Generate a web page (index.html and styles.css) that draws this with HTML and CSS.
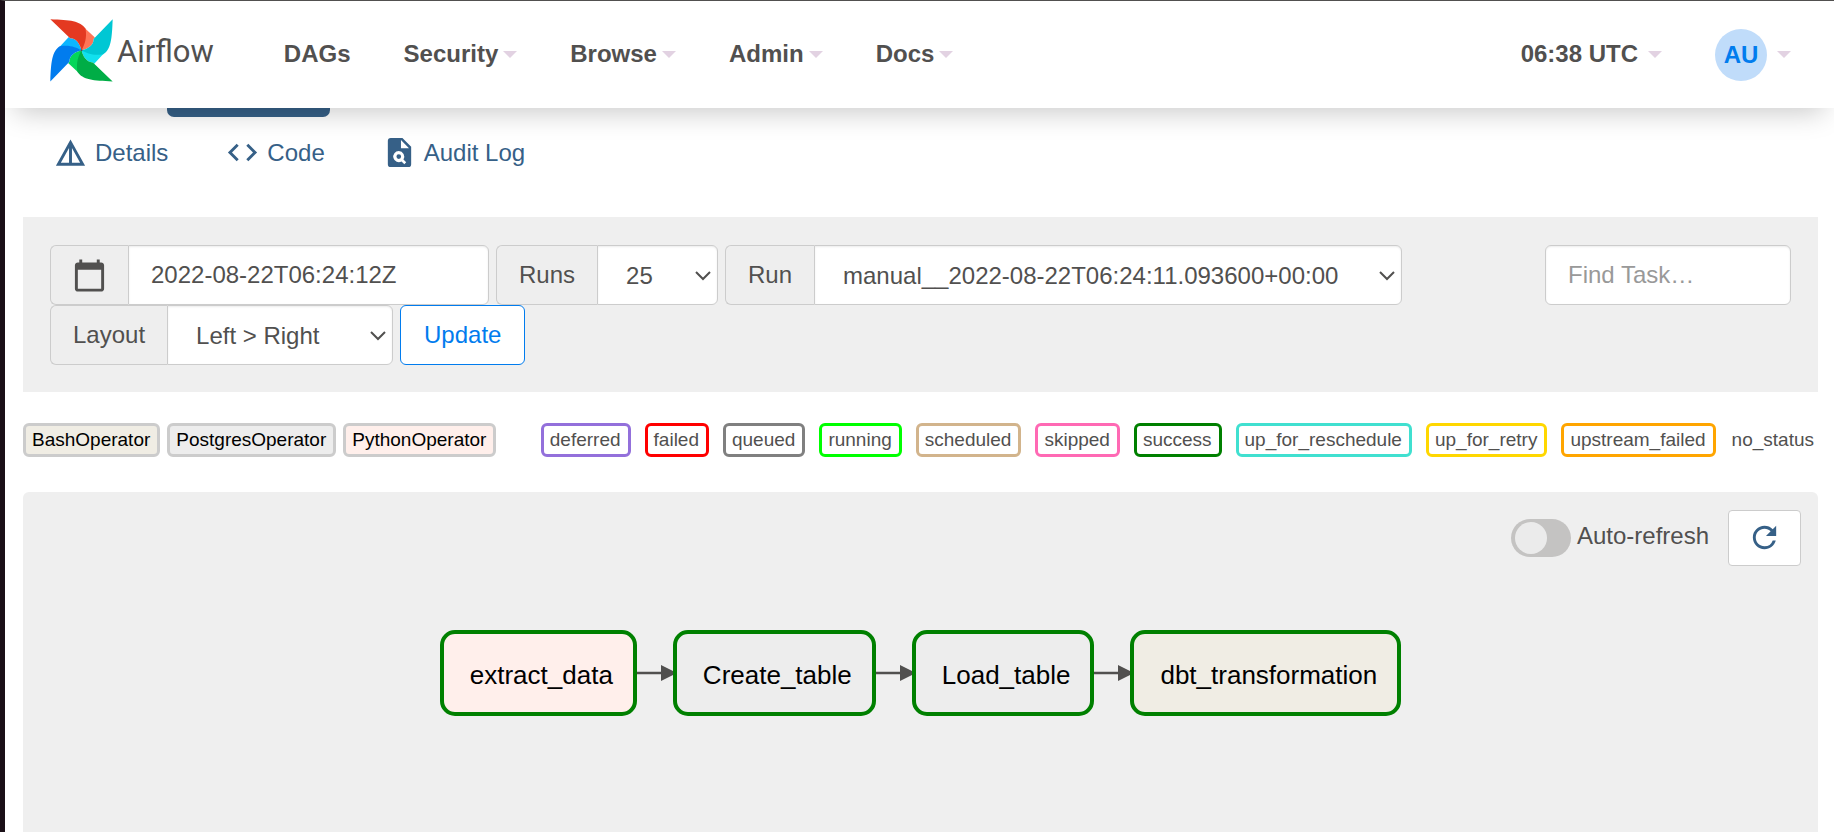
FILE: index.html
```html
<!DOCTYPE html>
<html lang="en">
<head>
<meta charset="utf-8">
<title>Airflow</title>
<link rel="stylesheet" href="styles.css">
</head>
<body>
<header class="navbar">
  <a class="brand" href="#">
    <svg class="brand-mark" viewBox="0 0 188 187" aria-hidden="true">
      <path fill="#ff7557" d="M105 28L134 55L130 59C131 77 112 89 94 93Z"/>
      <path fill="#11e1ee" d="M159 104L132 133L128 129C110 130 98 111 94 93Z"/>
      <path fill="#04d659" d="M83 158L54 131L58 127C57 109 76 97 94 93Z"/>
      <path fill="#0cb6ff" d="M29 82L56 53L60 57C78 56 90 75 94 93Z"/>
      <path fill="#e43921" d="M1 0C60 2 90 5 106 28C111 58 103 76 94 93C90 75 78 56 60 57Z"/>
      <path fill="#00c7d4" d="M187 0C185 59 182 89 159 105C129 110 111 102 94 93C112 89 131 77 130 59Z"/>
      <path fill="#00ad46" d="M187 186C128 184 98 181 82 158C77 128 85 110 94 93C98 111 110 130 128 129Z"/>
      <path fill="#017cee" d="M1 186C3 127 6 97 29 81C59 76 77 84 94 93C76 97 57 109 58 127Z"/>
      <circle cx="94" cy="93" r="3" fill="#51504f"/>
    </svg>
    <span class="brand-name">Airflow</span>
  </a>
  <nav class="menu">
    <a class="menu-item" href="#">DAGs</a>
    <a class="menu-item" href="#">Security<span class="caret"></span></a>
    <a class="menu-item" href="#">Browse<span class="caret"></span></a>
    <a class="menu-item" href="#">Admin<span class="caret"></span></a>
    <a class="menu-item" href="#">Docs<span class="caret"></span></a>
  </nav>
  <div class="account">
    <a class="account-item" href="#">06:38 UTC<span class="caret"></span></a>
    <a class="account-item" href="#"><span class="avatar">AU</span><span class="caret"></span></a>
  </div>
</header>

<main class="page">
  <div class="active-tab"></div>
  <nav class="tabs">
    <a class="tab" href="#">
      <svg class="tab-icon" viewBox="0 0 24 24" aria-hidden="true"><path d="M12 3L2 21h20L12 3zm1 5.920L18.600 19H13V8.920zm-2 0V19H5.400L11 8.920z"/></svg>
      Details
    </a>
    <a class="tab" href="#">
      <svg class="tab-icon" viewBox="0 0 24 24" aria-hidden="true"><path d="M9.400 16.600L4.800 12l4.600-4.600L8 6l-6 6 6 6 1.400-1.400zm5.200 0l4.600-4.600-4.600-4.600L16 6l6 6-6 6-1.400-1.400z"/></svg>
      Code
    </a>
    <a class="tab" href="#">
      <svg class="tab-icon" viewBox="0 0 24 24" aria-hidden="true"><path fill-rule="evenodd" d="M6 2h8l6 6v12a2 2 0 0 1-2 2H6a2 2 0 0 1-2-2V4a2 2 0 0 1 2-2zM13 3.500V9h5.500zM11.500 11a3.800 3.800 0 1 0 1.900 7.100l1.900 1.900 1.300-1.300-1.900-1.900A3.800 3.800 0 0 0 11.500 11zM11.500 13.200a1.600 1.600 0 1 1 0 3.200 1.600 1.600 0 0 1 0-3.200z"/></svg>
      Audit Log
    </a>
  </nav>

  <form class="filters">
    <div class="filter-row">
      <div class="group group-date">
        <label class="addon" for="base-date" aria-label="Base date">
          <svg class="calendar" viewBox="0 0 24 24" aria-hidden="true"><path d="M20 3h-1V1h-2v2H7V1H5v2H4c-1.100 0-2 .9-2 2v16c0 1.100.9 2 2 2h16c1.100 0 2-.9 2-2V5c0-1.100-.9-2-2-2zm0 18H4V8h16v13z"/></svg>
        </label>
        <input class="field" id="base-date" type="text" value="2022-08-22T06:24:12Z">
      </div>
      <div class="group group-runs">
        <label class="addon" for="runs">Runs</label>
        <div class="select-box">
          <select class="field select" id="runs"><option>25</option></select>
          <svg class="chevron" viewBox="0 0 16 10" aria-hidden="true"><path d="M1 1l7 7 7-7"/></svg>
        </div>
      </div>
      <div class="group group-run">
        <label class="addon" for="run">Run</label>
        <div class="select-box">
          <select class="field select" id="run"><option>manual__2022-08-22T06:24:11.093600+00:00</option></select>
          <svg class="chevron" viewBox="0 0 16 10" aria-hidden="true"><path d="M1 1l7 7 7-7"/></svg>
        </div>
      </div>
      <input class="field search" type="search" placeholder="Find Task…" aria-label="Find Task">
    </div>
    <div class="filter-row">
      <div class="group group-layout">
        <label class="addon" for="layout">Layout</label>
        <div class="select-box">
          <select class="field select" id="layout"><option>Left &gt; Right</option></select>
          <svg class="chevron" viewBox="0 0 16 10" aria-hidden="true"><path d="M1 1l7 7 7-7"/></svg>
        </div>
      </div>
      <button class="update" type="button">Update</button>
    </div>
  </form>

  <div class="legend">
    <div class="operators">
      <span class="badge operator bash">BashOperator</span>
      <span class="badge operator postgres">PostgresOperator</span>
      <span class="badge operator python">PythonOperator</span>
    </div>
    <div class="states">
      <span class="badge deferred">deferred</span>
      <span class="badge failed">failed</span>
      <span class="badge queued">queued</span>
      <span class="badge running">running</span>
      <span class="badge scheduled">scheduled</span>
      <span class="badge skipped">skipped</span>
      <span class="badge success">success</span>
      <span class="badge reschedule">up_for_reschedule</span>
      <span class="badge retry">up_for_retry</span>
      <span class="badge upstream">upstream_failed</span>
      <span class="badge no-status">no_status</span>
    </div>
  </div>

  <section class="graph">
    <div class="graph-tools">
      <label class="switch"><input class="switch-input" type="checkbox" role="switch"><span class="switch-label">Auto-refresh</span></label>
      <button class="refresh" type="button" aria-label="Refresh">
        <svg class="refresh-icon" viewBox="0 0 24 24" aria-hidden="true"><path d="M17.650 6.350A7.958 7.958 0 0 0 12 4c-4.420 0-7.990 3.580-7.990 8s3.570 8 7.990 8c3.730 0 6.840-2.550 7.730-6h-2.080A5.990 5.990 0 0 1 12 18c-3.310 0-6-2.690-6-6s2.690-6 6-6c1.660 0 3.140.69 4.220 1.780L13 11h7V4l-2.350 2.350z"/></svg>
      </button>
    </div>
    <div class="flow">
      <div class="node python">extract_data</div>
      <svg class="edge" viewBox="0 0 36 16" aria-hidden="true"><path d="M0 6.700h24V0l16 8-16 8V9.300H0z"/></svg>
      <div class="node postgres">Create_table</div>
      <svg class="edge" viewBox="0 0 36 16" aria-hidden="true"><path d="M0 6.700h24V0l16 8-16 8V9.300H0z"/></svg>
      <div class="node postgres">Load_table</div>
      <svg class="edge" viewBox="0 0 36 16" aria-hidden="true"><path d="M0 6.700h24V0l16 8-16 8V9.300H0z"/></svg>
      <div class="node bash">dbt_transformation</div>
    </div>
  </section>
</main>
</body>
</html>
```

FILE: styles.css
```css
* {
  box-sizing: border-box;
}

body {
  display: flex;
  flex-direction: column;
  min-height: 100vh;
  margin: 0;
  border-top: 1px solid #51504f;
  border-left: 5px solid #1a0f17;
  background: #fff;
  color: #51504f;
  font: 24px/28px "Liberation Sans", Arial, sans-serif;
}

a {
  color: inherit;
  text-decoration: none;
}

/* Top bar */
.navbar {
  position: relative;
  z-index: 1;
  display: flex;
  align-items: center;
  height: 107px;
  padding: 0 43px 0 45px;
  background: #fff;
  box-shadow: 0 14px 26px -10px rgba(0, 0, 0, 0.22);
  font-weight: 700;
}

.brand {
  display: flex;
  align-items: center;
  gap: 4px;
  padding-bottom: 8px;
}

.brand-mark {
  width: 63px;
  height: 63px;
}

.brand-name {
  padding-top: 2px;
  font: 400 31px/36px Roboto, sans-serif;
}

.menu {
  display: flex;
  gap: 53px;
  margin-left: 70px;
}

.menu-item,
.account-item {
  display: flex;
  align-items: center;
  padding-bottom: 2px;
}

.menu-item {
  gap: 5px;
}

.account-item {
  gap: 10px;
}

.caret {
  margin-top: 2px;
  border-top: 7px solid #e2d2e2;
  border-right: 7px solid transparent;
  border-left: 7px solid transparent;
}

.account {
  display: flex;
  align-items: center;
  gap: 53px;
  margin-left: auto;
}

.avatar {
  width: 52px;
  height: 52px;
  margin-top: 2px;
  border-radius: 50%;
  background: #c0dcfa;
  color: #017cee;
  line-height: 52px;
  text-align: center;
}

/* Page body */
.page {
  display: flex;
  flex: 1;
  flex-direction: column;
  padding: 0 16px 0 18px;
}

.active-tab {
  width: 163px;
  height: 9px;
  margin-left: 144px;
  border-radius: 0 0 7px 7px;
  background: #366087;
}

.tabs {
  display: flex;
  gap: 57px;
  padding: 18px 30px 47px;
}

.tab {
  display: flex;
  align-items: center;
  gap: 7px;
  color: #366087;
}

.tab-icon {
  width: 35px;
  height: 35px;
  fill: currentColor;
}

/* Filters */
.filters {
  display: flex;
  flex-direction: column;
  padding: 28px 27px 27px;
  background: #efefef;
}

.filter-row {
  display: flex;
  gap: 7px;
}

.group {
  display: flex;
}

.group-date {
  width: 439px;
}

.group-runs {
  width: 222px;
}

.group-run {
  width: 677px;
}

.group-layout {
  width: 343px;
}

.addon {
  display: flex;
  align-items: center;
  padding: 0 22px;
  border: 1px solid #ccc;
  border-right: 0;
  border-radius: 6px 0 0 6px;
  background: #eee;
}

.group-date .addon {
  padding: 0 21px;
}

.calendar {
  width: 35px;
  height: 35px;
  fill: currentColor;
}

.field {
  width: 100%;
  min-width: 0;
  height: 60px;
  margin: 0;
  padding: 0 22px;
  border: 1px solid #ccc;
  border-radius: 6px;
  background: #fff;
  box-shadow: inset 0 1px 2px rgba(0, 0, 0, 0.08);
  color: inherit;
  font: inherit;
  appearance: none;
}

.field::placeholder {
  color: #999;
}

.group .field {
  border-radius: 0 6px 6px 0;
}

.select-box {
  position: relative;
  flex: 1;
}

.select {
  padding: 2px 28px 0;
}

.chevron {
  position: absolute;
  top: 26px;
  right: 7px;
  width: 16px;
  height: 10px;
  fill: none;
  stroke: currentColor;
  stroke-width: 2;
  pointer-events: none;
}

.search {
  width: 246px;
  margin-left: auto;
}

.update {
  height: 60px;
  padding: 0 23px;
  border: 1px solid #017cee;
  border-radius: 6px;
  background: #fff;
  color: #017cee;
  font: inherit;
}

/* Legend */
.legend {
  display: flex;
  justify-content: space-between;
  margin: 31px 0 35px;
  font-size: 19px;
}

.operators {
  display: flex;
  gap: 7px;
}

.states {
  display: flex;
  gap: 14px;
}

.badge {
  padding: 0 7px 0 6px;
  border: 3px solid;
  border-radius: 6px;
}

.bash {
  background: #f0ede4;
}

.postgres {
  background: #ededed;
}

.python {
  background: #ffefeb;
}

.operator,
.node {
  color: #000;
}

.operator {
  border-color: #ccc;
}

.states .badge {
  border-color: var(--state);
}

.deferred { --state: mediumpurple; }
.failed { --state: red; }
.queued { --state: gray; }
.running { --state: lime; }
.scheduled { --state: tan; }
.skipped { --state: hotpink; }
.success { --state: green; }
.reschedule { --state: turquoise; }
.retry { --state: gold; }
.upstream { --state: orange; }

.states .no-status {
  padding: 3px 4px 3px 2px;
  border: 0;
}

/* Graph */
.graph {
  flex: 1;
  padding: 18px 17px;
  border-radius: 6px 6px 0 0;
  background: #efefef;
}

.graph-tools {
  display: flex;
  align-items: center;
  justify-content: flex-end;
  gap: 19px;
}

.switch {
  display: flex;
  align-items: center;
  gap: 6px;
}

.switch-label {
  padding-bottom: 4px;
}

.switch-input {
  width: 60px;
  height: 38px;
  margin: 0;
  padding: 3px 4px;
  border-radius: 19px;
  background: #c4c3c2;
  appearance: none;
}

.switch-input::before {
  content: "";
  display: block;
  width: 32px;
  height: 32px;
  border-radius: 50%;
  background: #ebebeb;
}

.switch-input:checked::before {
  margin-left: auto;
}

.refresh {
  display: flex;
  align-items: center;
  justify-content: center;
  width: 73px;
  height: 56px;
  padding: 0 0 2px;
  border: 1px solid #ccc;
  border-radius: 4px;
  background: #fff;
  color: #366087;
}

.refresh-icon {
  width: 35px;
  height: 35px;
  fill: currentColor;
}

.flow {
  display: flex;
  align-items: center;
  justify-content: center;
  margin-top: 64px;
}

.node {
  padding: 27px 20px 23px 26px;
  border: 4px solid green;
  border-radius: 15px;
  font-size: 26px;
}

.edge {
  width: 36px;
  height: 16px;
  fill: #51504f;
}
```
